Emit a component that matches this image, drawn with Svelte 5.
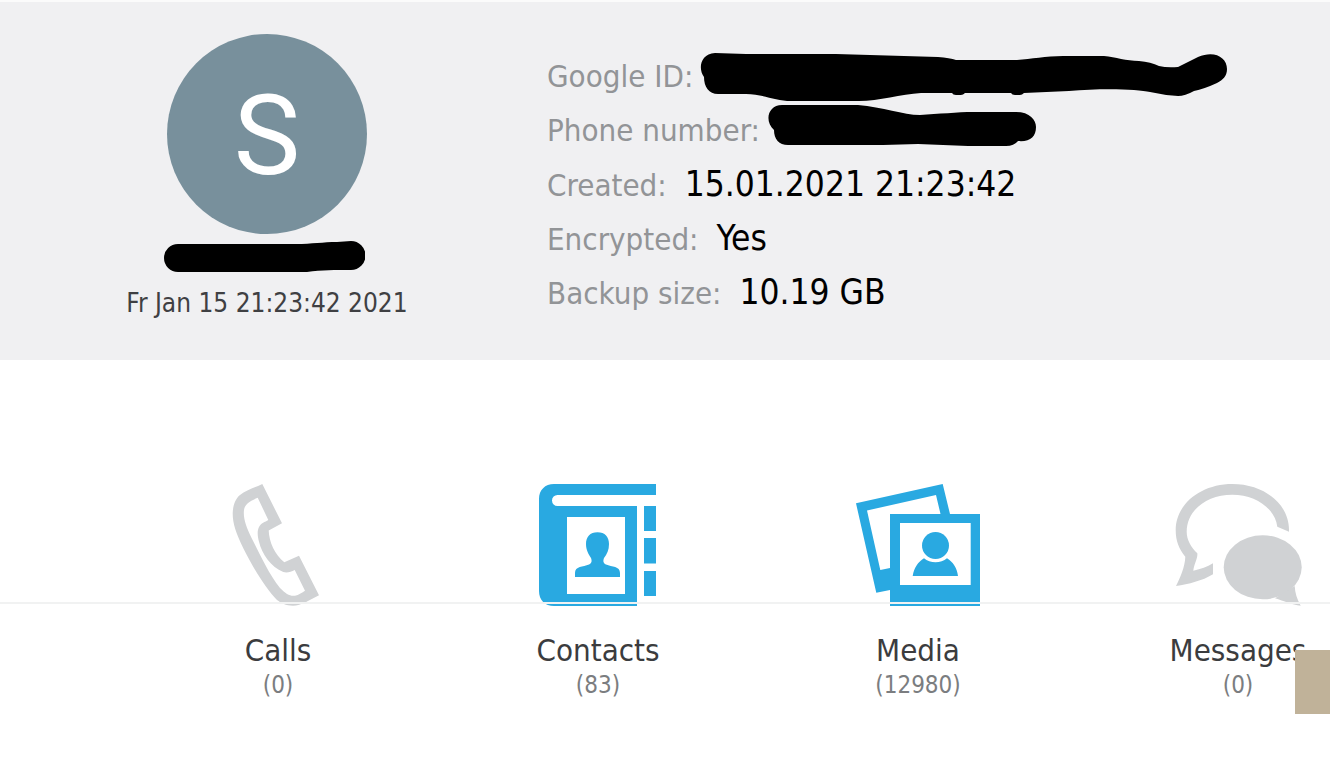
<script lang="ts">
  interface Detail {
    label: string
    value?: string
    mask?: { width: number; path: string }
  }

  interface Category {
    name: string
    count: number
    icon: 'calls' | 'contacts' | 'media' | 'messages'
  }

  const details: Detail[] = [
    {
      label: 'Google ID:',
      mask: {
        width: 526,
        path: 'M14 4L45 5H135L237 8Q249 9 255 11H316C330 10 345 7 362 7H403C415 8 425 12 438 12Q450 13 458 17Q466 19 477 18L497 8C513 1 526 8 526 20C526 27 522 31 516 34Q503 40 493 42Q484 47 477 47Q462 46 449 43C437 40 400 39 368 42L323 44Q321 46 319 46H314Q311 46 310 44H264Q262 46 260 46H255Q252 46 251 44H220C200 45 178 52 158 52H90C74 52 62 45 45 45H17C8 45 3 38 3 28C-3 20 -1 5 14 4Z',
      },
    },
    {
      label: 'Phone number:',
      mask: {
        width: 268,
        path: 'M14 2H90C115 4 135 12 152 12C170 11 190 9 205 9H248C262 9 268 17 268 24C268 34 262 39 250 38Q246 43 238 43H200L150 41L115 42H20C11 42 6 36 6 27C-4 18 0 2 14 2Z',
      },
    },
    { label: 'Created:', value: '15.01.2021 21:23:42' },
    { label: 'Encrypted:', value: 'Yes' },
    { label: 'Backup size:', value: '10.19 GB' },
  ]

  const categories: Category[] = [
    { name: 'Calls', count: 0, icon: 'calls' },
    { name: 'Contacts', count: 83, icon: 'contacts' },
    { name: 'Media', count: 12980, icon: 'media' },
    { name: 'Messages', count: 0, icon: 'messages' },
  ]
</script>

<main class="backup">
  <header class="summary">
    <div class="account">
      <div class="avatar">S</div>
      <svg class="name-mask" viewBox="0 0 201 32" aria-hidden="true">
        <path d="M14 3H132C148 3 159 1 173 1L187 0A14 14 0 0 1 187 29C171 29 158 29 143 31H14A14 14 0 0 1 14 3Z" />
      </svg>
      <div class="date">Fr Jan 15 21:23:42 2021</div>
    </div>
    <dl class="details">
      {#each details as detail}
        <div class="row">
          <dt>{detail.label}</dt>
          {#if detail.mask}
            <dd class="masked">
              <svg width={detail.mask.width} height="54" aria-hidden="true">
                <path d={detail.mask.path} />
              </svg>
            </dd>
          {:else}
            <dd>{detail.value}</dd>
          {/if}
        </div>
      {/each}
    </dl>
  </header>

  <section class="categories">
    {#each categories as category}
      <button class="category" class:empty={category.count === 0}>
        <svg class="icon" viewBox="0 0 128 122" aria-hidden="true">
          {#if category.icon === 'calls'}
            <path
              fill-rule="evenodd"
              d="M48.3 0L68 39.3L54.7 46.5C55 58 61 71 70.3 78.3L85 71.7L105 111.3C96 116 87 121.7 79 121.7C72 121.7 67 119 63 116C52 105 38 82 29.3 64.3C22 49 18.7 40 18.7 29.3C19 22 21 15 26 11C32 6 40 4 48.3 0ZM43.7 13.7C36 17 31 20 30 26C29 34 32 43 37.7 54.3C44 66 54 89 66 104C72 110 76 112.5 81 111.7C85 111 87 109 91 106.7L80.7 86C77 88 73 89 69.3 88C57 83 48 70 45 57.7C43.5 52 43 47 45 43C47 39 51 38 54.3 36Z"
            />
          {:else if category.icon === 'contacts'}
            <path
              fill-rule="evenodd"
              d="M122 0H20C11 0 5 6 5 15V107C5 116 11 122 20 122H103V22H23.500A5.500 5.500 0 0 1 23.500 11H122ZM33 33H91V110H33ZM110 22H122V47H110ZM110 54H122V79.500H110ZM110 87H122V112H110Z"
            />
            <path
              d="M63.500 48.300C56 48.300 52 53 52 60C52 66 54.500 70 57 74C58 77 58 79 55 80.500C49 83 41 82 41 89V93H86V89C86 82 78 83 72 80.500C69 79 69 77 70 74C73 70 75 66 75 60C75 53 71 48.300 63.500 48.300Z"
            />
          {:else if category.icon === 'media'}
            <path
              d="M2 19.300L88.700 0L96 30H86.500L82 11L13 26.500L26.300 86L36 84V106L22.300 108.700Z"
            />
            <path fill-rule="evenodd" d="M36 30H126V122H36ZM46 39V101H116.700V39Z" />
            <circle cx="81.500" cy="61.500" r="13.500" />
            <path d="M58.700 92C60 84 64 78 70 74.300C76 79.500 87 79.500 93 74.300C99 78 103 84 104 92Z" />
          {:else}
            <path
              d="M115 47.700L103.300 42.700C101 24 81 10.700 58.300 10.700C33 10.700 12.700 26 12.700 47.700C12.700 56 17 63 23.300 69.300C24 74 20 80 19.300 86.700C27 85 33 83 39 79.300V90.300C28 97 15 100 2 102C6 94 11 83 11.300 72.700C5 65 1.700 57 1.700 46C1.700 20 27 0 58.300 0C90 0 116 20 115 47.700Z"
            />
            <ellipse cx="88.700" cy="83.300" rx="39" ry="32" />
            <path d="M101 114.300C110 117 118 121 126.700 121.700C123 115 121 109 120.700 102Z" />
          {/if}
        </svg>
        <span class="name">{category.name}</span>
        <span class="count">({category.count})</span>
      </button>
    {/each}
    <div class="divider"></div>
  </section>

  <div class="corner"></div>
</main>

<style>
  :global(body) {
    margin: 0;
    background: #fff;
  }

  .backup {
    position: relative;
    overflow: hidden;
    min-height: 100vh;
    font-family: Tahoma, 'DejaVu Sans Condensed', 'Noto Sans', sans-serif;
  }

  .summary {
    display: flex;
    box-sizing: border-box;
    border-top: 2px solid #fbfbfb;
    padding-bottom: 41px;
    background: #f0f0f2;
  }

  .account {
    display: flex;
    flex: none;
    flex-direction: column;
    align-items: center;
    width: 534px;
    padding-top: 32px;
  }

  .avatar {
    width: 200px;
    height: 200px;
    border-radius: 50%;
    background: #78909c;
    color: #fff;
    font-family: Roboto, sans-serif;
    font-size: 112px;
    line-height: 204px;
    text-align: center;
  }

  .name-mask {
    width: 201px;
    margin: 7px 6px 0 0;
  }

  .date {
    margin-top: 14px;
    color: #3f4043;
    font-size: 26px;
    line-height: 32px;
  }

  .details {
    margin: 0;
    padding: 47px 0 0 13px;
  }

  .row {
    display: flex;
    align-items: baseline;
    height: 54px;
    line-height: 54px;
    white-space: nowrap;
  }

  dt {
    color: #929497;
    font-size: 31px;
  }

  dd {
    margin: 0 0 0 18px;
    color: #000;
    font-size: 35px;
  }

  .masked {
    align-self: flex-start;
    margin-left: 8px;
  }

  .masked svg {
    display: block;
    overflow: visible;
  }

  .categories {
    position: relative;
    display: grid;
    grid-template-columns: repeat(4, 320px);
    padding: 124px 0 48px 118px;
  }

  .category {
    display: flex;
    flex-direction: column;
    align-items: center;
    padding: 0;
    border: none;
    background: none;
    color: #29a9e1;
    font-family: inherit;
    cursor: pointer;
  }

  .category.empty {
    color: #d0d2d4;
  }

  .icon {
    width: 128px;
    fill: currentColor;
  }

  .name {
    margin-top: 24px;
    color: #3b3c3e;
    font-size: 31px;
    line-height: 40px;
  }

  .count {
    color: #7b7d80;
    font-size: 24px;
    line-height: 30px;
  }

  .divider {
    position: absolute;
    top: 242px;
    right: 0;
    left: 0;
    height: 2px;
    background: #f1f2f2;
  }

  .corner {
    position: absolute;
    top: 650px;
    right: 0;
    width: 35px;
    height: 64px;
    background: #c0b299;
  }
</style>
